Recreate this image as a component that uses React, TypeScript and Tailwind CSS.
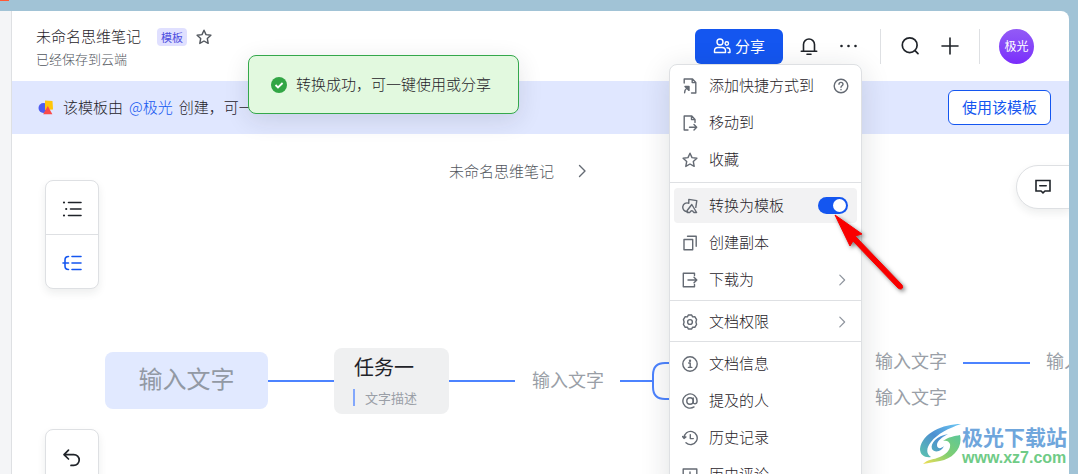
import { useState } from "react";
import type { ReactNode } from "react";

type IconProps = { children: ReactNode; className?: string; box?: string };

function Icon({ children, className = "size-4", box = "0 0 16 16" }: IconProps) {
  return (
    <svg
      viewBox={box}
      className={`${className} shrink-0`}
      fill="none"
      stroke="currentColor"
      strokeWidth="1.4"
      strokeLinejoin="round"
      strokeLinecap="round"
      aria-hidden="true"
    >
      {children}
    </svg>
  );
}

const starPath = "M8 1.2l2 4.4 4.9.6-3.6 3.3.9 4.9L8 12l-4.2 2.4.9-4.9L1.1 6.2 6 5.6z";

const icons = {
  shortcut: (
    <Icon>
      <path d="M2.2 5V1h8.3l3.3 3.4V15H9.5M10.2 1v3.6h3.6" />
      <path d="M2.6 14.8c0-2.5 1-3.8 2.4-4.8" />
      <path d="M3 8.4h4v4z" fill="currentColor" />
    </Icon>
  ),
  move: (
    <Icon>
      <path d="M6 15H2.2V1h7.6L13 4.4v3M9.5 1v3.6H13M7.5 12.3h7M12 9.6l2.7 2.7L12 15" />
    </Icon>
  ),
  star: (
    <Icon>
      <path d={starPath} />
    </Icon>
  ),
  template: (
    <Icon>
      <path d="M6.8 5.3A4.3 4.3 0 1 0 5.5 13.5M6.8 5.3V1.4l8 1.2-1 6.8" />
      <path d="M5.2 14.5v-2l4.6-6 4.8 8h-2.8q-2-3.5-4 0z" />
    </Icon>
  ),
  copy: (
    <Icon>
      <path d="M2 4.5h8.7v10.3H2zM5.5 1.3h8.7v10" />
    </Icon>
  ),
  download: (
    <Icon>
      <path d="M12.5 3.5V1.2H1.3v13.6h11.2v-2.3M6 8h8.7M12 5.2L14.8 8 12 10.8" />
    </Icon>
  ),
  permission: (
    <Icon>
      <path d="M6.3 1h3.4l.9 1.9 2.2-.2 1.8 2.9L13.9 8l.7 2.4-1.8 2.9-2.2-.2-.9 1.9H6.3l-.9-1.9-2.2.2-1.8-2.9L2.1 8l-.7-2.4 1.8-2.9 2.2.2z" />
      <circle cx="8" cy="8" r="2.4" />
    </Icon>
  ),
  info: (
    <Icon>
      <circle cx="8" cy="8" r="7.2" />
      <path d="M6.7 7h1.5v4.3M6.4 11.4h3.4" />
      <circle cx="8" cy="4.7" r=".5" fill="currentColor" />
    </Icon>
  ),
  mention: (
    <Icon>
      <circle cx="8" cy="8" r="3.2" />
      <path d="M11.2 4.9v4.3c0 2.3 3.9 2.3 3.9-1.2A7.1 7.1 0 1 0 12 13.9" />
    </Icon>
  ),
  history: (
    <Icon>
      <path d="M2 8a6.6 6.6 0 1 1 2 4.7M.6 6.5L2 8.4l1.9-1.5M8.3 4.6v4h3" />
    </Icon>
  ),
  comments: (
    <Icon>
      <path d="M1.2 2h13.6v10.5H10l-2 2-2-2H1.2zM8 5v4.5" />
    </Icon>
  ),
};

const chevron = (
  <Icon className="size-3.5 text-[#8f959e]">
    <path d="M5.5 2.5L11 8l-5.5 5.5" />
  </Icon>
);

function MenuItem({ icon, label, right }: { icon: ReactNode; label: string; right?: ReactNode }) {
  return (
    <button className="flex h-[37px] w-full items-center gap-[11px] px-3 text-left">
      <span className="text-[#646a73]">{icon}</span>
      <span className="flex-1 whitespace-nowrap">{label}</span>
      {right}
    </button>
  );
}

function DocMenu() {
  const [isTemplate, setIsTemplate] = useState(true);

  return (
    <div className="absolute top-[53px] right-[207px] w-[193px] rounded-lg border border-[#dee0e3] bg-white text-[15px] shadow-[0_6px_30px_rgba(31,35,41,0.14)]">
      <div className="border-b border-[#dee0e3] pt-0.5 pb-1">
        <MenuItem
          icon={icons.shortcut}
          label="添加快捷方式到"
          right={
            <Icon className="size-4 text-[#646a73]">
              <circle cx="8" cy="8" r="6.8" />
              <path d="M6 6.3c0-2.6 4-2.6 4 0 0 1.5-2 1.5-2 3M8 11.5v.2" />
            </Icon>
          }
        />
        <MenuItem icon={icons.move} label="移动到" />
        <MenuItem icon={icons.star} label="收藏" />
      </div>
      <div className="border-b border-[#dee0e3] pt-1 pb-0.5">
        <label className="mx-1 my-px flex h-[35px] items-center gap-[11px] rounded bg-[#f2f2f3] pr-[9px] pl-2">
          <span className="text-[#646a73]">{icons.template}</span>
          <span className="flex-1">转换为模板</span>
          <input
            type="checkbox"
            role="switch"
            checked={isTemplate}
            onChange={(e) => setIsTemplate(e.target.checked)}
            className="flex h-[17px] w-[30px] appearance-none items-center rounded-full bg-[#bbbfc4] px-0.5 before:size-[13px] before:rounded-full before:bg-white checked:justify-end checked:bg-[#1456f0]"
          />
        </label>
        <MenuItem icon={icons.copy} label="创建副本" />
        <MenuItem icon={icons.download} label="下载为" right={chevron} />
      </div>
      <div className="border-b border-[#dee0e3] pt-0.5 pb-px">
        <MenuItem icon={icons.permission} label="文档权限" right={chevron} />
      </div>
      <div className="pt-[3px] pb-1">
        <MenuItem icon={icons.info} label="文档信息" />
        <MenuItem icon={icons.mention} label="提及的人" />
        <MenuItem icon={icons.history} label="历史记录" />
        <MenuItem icon={icons.comments} label="历史评论" />
      </div>
    </div>
  );
}

function Header() {
  return (
    <header className="flex h-[70px] shrink-0 items-center pr-[35px] pl-6">
      <div className="flex-1 pt-[3px]">
        <div className="flex h-[22px] items-center">
          <h1 className="text-[15px] font-light">未命名思维笔记</h1>
          <span className="ml-4 rounded bg-[#e0e0ff] px-1 text-[11px] leading-[18px] font-normal text-[#4e4ee0]">
            模板
          </span>
          <button aria-label="收藏" className="ml-[9px] text-[#51565d]">
            <Icon>
              <path d={starPath} />
            </Icon>
          </button>
        </div>
        <p className="text-[13px] leading-[22px] text-[#51565d]">已经保存到云端</p>
      </div>
      <button className="flex h-[35px] w-[88px] items-center justify-center gap-1 rounded-md bg-[#1456f0] text-[15px] font-normal text-white">
        <Icon className="size-[18px]" box="0 0 18 18">
          <circle cx="7" cy="5" r="3" />
          <path d="M1.5 15.5v-1.8c0-2 1.5-3.2 3.5-3.2h4c2 0 3.5 1.2 3.5 3.2v1.8zM14 10.8c1.9 0 3 1 3 2.7v2h-1.8" />
          <circle cx="13.8" cy="6.5" r="1.7" />
        </Icon>
        分享
      </button>
      <button aria-label="通知" className="ml-3.5 flex w-6 justify-center">
        <Icon className="size-5" box="0 0 20 20">
          <path strokeWidth="1.6" d="M4.5 15V8.5a5.5 5.5 0 0 1 11 0V15M2.3 15.2h15.4M8 18.3h4" />
        </Icon>
      </button>
      <button aria-label="更多" className="ml-4 flex w-6 justify-center">
        <Icon className="size-5" box="0 0 20 20">
          <path strokeWidth="2.6" d="M2.5 10h0M9.5 10h0M16.5 10h0" />
        </Icon>
      </button>
      <span className="mx-[19px] h-[35px] w-px bg-[#dee0e3]" />
      <button aria-label="搜索">
        <Icon className="size-5" box="0 0 20 20">
          <circle cx="9.7" cy="9.2" r="7.4" strokeWidth="1.7" />
          <path strokeWidth="1.7" d="M15 14.6l3 3" />
        </Icon>
      </button>
      <button aria-label="新建" className="ml-5">
        <Icon className="size-5" box="0 0 20 20">
          <path strokeWidth="1.6" d="M10 2v16M2 10h16" />
        </Icon>
      </button>
      <span className="mx-[19px] h-[35px] w-px bg-[#dee0e3]" />
      <span className="flex size-[35px] items-center justify-center rounded-full bg-linear-to-b from-[#935af6] to-[#7a2bfb] text-xs font-normal text-white">
        极光
      </span>
    </header>
  );
}

function Banner() {
  return (
    <div className="flex h-[53px] shrink-0 items-center bg-[#e0e7ff] pr-[18px] pl-[26px] text-[15px]">
      <svg viewBox="0 0 16 16" className="mr-[9px] size-4" aria-hidden="true">
        <circle cx="5.5" cy="8" r="5" fill="#4e5cf0" />
        <path d="M7 .5l7.500.5.500 8.500-8 .5z" fill="#ffc60a" />
        <path d="M9.800 6l4.600 8.200H5.200z" fill="#fa4b4b" />
      </svg>
      <p className="flex-1 whitespace-nowrap">
        该模板由
        <a href="#creator" className="mx-1.5 text-[#1456f0]">
          @极光
        </a>
        创建，可一
      </p>
      <button className="h-[35px] w-[103px] rounded-md border border-[#1456f0] bg-white font-normal text-[#1456f0]">
        使用该模板
      </button>
    </div>
  );
}

const floating = "border border-[#dee0e3] bg-white shadow-[0_4px_8px_rgba(31,35,41,0.08)]";
const placeholder = "text-lg leading-7 font-normal whitespace-nowrap text-[#9a9fa7]";

function Canvas() {
  return (
    <section className="relative flex-1 overflow-hidden">
      <nav className="flex items-center justify-center gap-5 pt-[26px] pr-[42px] text-[15px] text-[#51565d]">
        <span>未命名思维笔记</span>
        <Icon className="size-4 text-[#646a73]">
          <path d="M5.500 2.500L11 8l-5.500 5.500" />
        </Icon>
      </nav>

      <svg className="absolute top-0 left-0 h-[340px] w-[1057px]" fill="none" stroke="#4c83ff" strokeWidth="2" aria-hidden="true">
        <path d="M256 247h66M437 247h66M608 247h33M951 229h67" />
        <path d="M671 229h-18q-12 0-12 12v12q0 12 12 12h18" />
      </svg>
      <div className="absolute top-[218px] left-[93px] flex h-[57px] w-[163px] items-center justify-center rounded-lg bg-[#e1e9ff] pb-1.5 text-2xl font-normal text-[#9299a4]">
        输入文字
      </div>
      <div className="absolute top-[214px] left-[322px] h-[66px] w-[115px] rounded-lg bg-[#eff0f1] pt-1 pl-5">
        <p className="text-xl leading-[30px] font-normal">任务一</p>
        <p className="mt-[7px] -ml-px border-l-2 border-[#82a7fc] pl-2.5 text-[13px] leading-[17px] font-normal text-[#9a9fa7]">
          文字描述
        </p>
      </div>
      <p className={`absolute top-[231px] left-[520px] ${placeholder}`}>输入文字</p>
      <p className={`absolute top-[212px] left-[863px] ${placeholder}`}>输入文字</p>
      <p className={`absolute top-[248px] left-[863px] ${placeholder}`}>输入文字</p>
      <p className={`absolute top-[212px] left-[1034px] ${placeholder}`}>输入文字</p>

      <div className={`absolute top-[46px] left-[33px] flex w-[54px] flex-col rounded-lg ${floating}`}>
        <button aria-label="大纲视图" className="flex h-[54px] items-center justify-center border-b border-[#dee0e3] pt-0.5">
          <Icon className="size-5" box="0 0 20 20">
            <path strokeWidth="1.6" d="M6.500 3.500h12.500M8.500 10H19M6.500 16.500H19" />
            <path strokeWidth="2.2" d="M2 3.500h0M4.200 10h0M2 16.500h0" />
          </Icon>
        </button>
        <button aria-label="导图视图" className="flex h-[53px] items-center justify-center pt-0.5 text-[#1456f0]">
          <Icon className="size-5" box="0 0 20 20">
            <path strokeWidth="1.6" d="M10 3.500h9M10 10h9M10 16.500h9M1 10h5.500M6.500 3.500Q3 3.500 3 7v6q0 3.500 3.500 3.500" />
          </Icon>
        </button>
      </div>
      <div className={`absolute top-[295px] left-[33px] w-[54px] rounded-lg ${floating}`}>
        <button aria-label="撤销" className="flex h-[54px] w-full items-center justify-center pt-0.5">
          <Icon className="size-5" box="0 0 20 20">
            <path strokeWidth="1.7" d="M6.500 2.200L2 6.600 6.500 11M2.300 6.600h9.500a5.400 5.400 0 0 1 0 10.800H9" />
          </Icon>
        </button>
      </div>
      <button
        aria-label="评论"
        className={`absolute top-[31px] -right-px flex h-11 w-[54px] items-center rounded-l-full pl-[18px] ${floating}`}
      >
        <Icon className="size-4">
          <path strokeWidth="1.6" strokeLinejoin="miter" d="M1 1.500h14v10.500h-5L8 13.800 6 12H1zM4.800 6.800h6.400" />
        </Icon>
      </button>
    </section>
  );
}

function Toast() {
  return (
    <div
      role="status"
      className="absolute top-11 left-[236px] flex h-[59px] w-[271px] items-center rounded-lg border border-[#34a84b] bg-[#e2f9df] pl-[22px] text-[15px] whitespace-nowrap shadow-[0_6px_24px_rgba(31,35,41,0.12)]"
    >
      <svg viewBox="0 0 16 16" className="mr-[9px] size-4" aria-hidden="true">
        <circle cx="8" cy="8" r="8" fill="#32a645" />
        <path d="M4.500 8l2.500 2.500 4.600-4.500" fill="none" stroke="#fff" strokeWidth="1.8" />
      </svg>
      转换成功，可一键使用或分享
    </div>
  );
}

function Arrow() {
  return (
    <svg
      viewBox="0 0 76 84"
      className="pointer-events-none absolute top-[201px] right-[160px] h-[84px] w-[76px] drop-shadow-[2px_2px_2px_rgba(0,0,0,0.5)]"
      aria-hidden="true"
    >
      <path d="M2 3l27 19-7 2L69 73q2 4-2 4l-2-1L20 29l-3 5z" fill="#f90000" stroke="#f90000" />
    </svg>
  );
}

function Watermark() {
  return (
    <div className="pointer-events-none absolute right-0.5 bottom-2 flex items-center">
      <svg viewBox="0 0 42 42" className="size-[42px]" aria-hidden="true">
        <defs>
          <linearGradient id="swirl-blue" x1="0" y1="1" x2="1" y2="0">
            <stop offset="0" stopColor="#5bc4ae" />
            <stop offset=".5" stopColor="#4d8fd0" />
            <stop offset="1" stopColor="#6cc8f5" />
          </linearGradient>
          <linearGradient id="swirl-green" x1="0" y1="1" x2="1" y2="0">
            <stop offset="0" stopColor="#f2df55" />
            <stop offset=".5" stopColor="#7fce72" />
            <stop offset="1" stopColor="#5cc79a" />
          </linearGradient>
        </defs>
        <path
          d="M41 1C23 1 2 10 0 26c0 6 5 9 11 8-5-3-5-9 0-15C17 11 29 5 41 1zM28 11C17 13 10 20 12 26c2 4 10 3 12-3-3 3-7 3-7-1 0-4 5-8 11-11z"
          fill="url(#swirl-blue)"
        />
        <path d="M40 12c3 13-7 24-20 26-6 1-11 2-17 3 5-5 9-4 14-6 9-3 14-8 13-14-1-3-4-4-7-3 5-4 12-5 17-6z" fill="url(#swirl-green)" />
      </svg>
      <div>
        <p className="text-[21px] leading-7 font-bold text-[#6fa6dc]">极光下载站</p>
        <p className="font-['Liberation_Sans',sans-serif] text-base leading-4 font-bold text-[#6fcb86]">www.xz7.com</p>
      </div>
    </div>
  );
}

export default function App() {
  return (
    <div className="flex h-screen flex-col overflow-hidden bg-[#a1c3d6] font-['Noto_Sans_CJK_SC',sans-serif] font-light text-[#1f2329]">
      <div className="h-[11px] shrink-0">
        <div className="h-px w-[9px] bg-[#ff5a36]" />
      </div>
      <div className="flex min-h-0 flex-1 pr-[9px]">
        <aside className="w-3 shrink-0 border-r border-[#dee0e3] bg-[#f4f5f7]" />
        <main className="relative flex min-w-0 flex-1 flex-col rounded-tr-lg bg-white">
          <Header />
          <Banner />
          <Canvas />
          <Toast />
          <DocMenu />
          <Arrow />
          <Watermark />
        </main>
      </div>
    </div>
  );
}
